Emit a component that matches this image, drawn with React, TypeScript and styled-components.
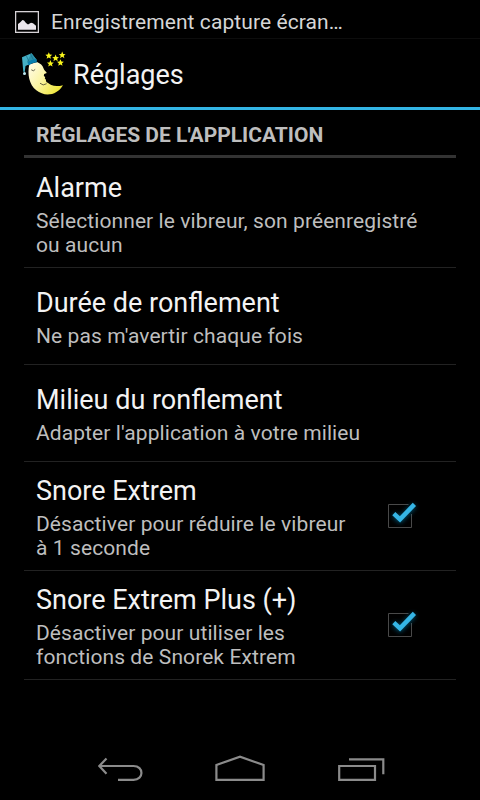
import styled, { createGlobalStyle } from "styled-components";

const settings = [
  {
    title: "Alarme",
    summary: ["Sélectionner le vibreur, son préenregistré", "ou aucun"],
  },
  {
    title: "Durée de ronflement",
    summary: ["Ne pas m'avertir chaque fois"],
  },
  {
    title: "Milieu du ronflement",
    summary: ["Adapter l'application à votre milieu"],
  },
  {
    title: "Snore Extrem",
    summary: ["Désactiver pour réduire le vibreur", "à 1 seconde"],
    checked: true,
  },
  {
    title: "Snore Extrem Plus (+)",
    summary: ["Désactiver pour utiliser les", "fonctions de Snorek Extrem"],
    checked: true,
  },
];

const stars = [
  [48.8, 55.8],
  [55.6, 58.2],
  [62.2, 55.2],
  [50.4, 63.6],
  [60.4, 62.8],
];

function PictureIcon() {
  return (
    <svg width="24" height="23" viewBox="0 0 24 23">
      <rect x="0.6" y="1.65" width="22.8" height="20.7" fill="none" stroke="#d6d2d6" strokeWidth="1.3" />
      <path d="M3 19.8V14L5 12.5L7.5 10L9 10.5L11 13L13 14.5L16 12.8L18 13.2L21 15.8V19.8Z" fill="#ebe6ec" />
    </svg>
  );
}

function MoonIcon() {
  return (
    <svg width="48" height="48" viewBox="20 50 48 48">
      <defs>
        <linearGradient id="moon" x1="28" y1="68" x2="60" y2="90" gradientUnits="userSpaceOnUse">
          <stop offset="0" stopColor="#fffbe4" />
          <stop offset="0.45" stopColor="#fbf5a4" />
          <stop offset="1" stopColor="#eee535" />
        </linearGradient>
      </defs>
      <path
        d="M29.3 64.5C27.2 74 29 84.5 36.3 90.3C45 97.5 57.5 95 63 85.2C58.5 86.4 54.5 86.4 51.2 85C49.5 84.3 48.2 82.6 46.6 82.2C45.6 81.3 46.5 79.5 44.8 78.6L45.2 77L43.8 76L44.2 73.9L46.8 72.9C46 71.2 43.8 70.2 43.5 68.2C42.7 65.5 40.3 63.4 37 62Z"
        fill="url(#moon)"
      />
      <path d="M31.3 69.8Q33.6 71.9 35.2 69.4M40 83.2Q43 86.4 46.6 83.7" fill="none" stroke="#42402c" strokeWidth="0.8" />
      <path d="M22 57.3L31.5 53.2L36.9 60.2L28.7 64.5L25.5 66L24.7 72L23.3 71.8Z" fill="#45afc5" />
      <path d="M31.5 53.2L36.9 60.2L28.4 65L27 61.5Z" fill="#2a91a9" />
      <path d="M27.8 62.2Q32.1 58.6 36.2 59.3L37 62.5Q32.5 61.8 28.7 65.5Z" fill="#087eaf" />
      <path d="M26.5 56L29 61.7M30.4 54L33.3 59.5" stroke="#176c85" strokeWidth="0.7" />
      <circle cx="24.5" cy="73.6" r="1.5" fill="#bfeaf2" />
      {stars.map(([x, y]) => (
        <path
          key={x}
          transform={`translate(${x} ${y})`}
          d="M0-3.6L1-1.2L3.4-1L1.5.6L2.2 3L0 1.6L-2.2 3L-1.5.6L-3.4-1L-1-1.2Z"
          fill="#f9f51c"
        />
      ))}
    </svg>
  );
}

function CheckIcon() {
  return (
    <svg width="48" height="48" viewBox="376 492 48 48">
      <defs>
        <filter id="glow" x="-50%" y="-50%" width="200%" height="200%">
          <feGaussianBlur stdDeviation="2.4" />
        </filter>
      </defs>
      <path d="M408.5 504.5H388.5V527.5H411.5V514" fill="none" stroke="#494949" />
      <path d="M394 514.5L400 520L414.3 505.3" fill="none" stroke="#087ba9" strokeWidth="4.5" opacity="0.75" filter="url(#glow)" />
      <path d="M393.8 513.6L400 519.3L414.4 504.4" fill="none" stroke="#35b5e5" strokeWidth="4.5" />
    </svg>
  );
}

function BackIcon() {
  return (
    <svg width="50" height="32" viewBox="95 753 50 32">
      <path d="M106.5 758.5L99.3 766L106.5 773.7M100 766H133.5C144.1 766 144.1 779.8 133.5 779.8H118" fill="none" stroke="#8b8b8b" strokeWidth="2.2" />
    </svg>
  );
}

function HomeIcon() {
  return (
    <svg width="50" height="32" viewBox="215 753 50 32">
      <path d="M216.4 779.8V765L240 756.6L263.6 765V779.8Z" fill="none" stroke="#8b8b8b" strokeWidth="2.2" />
    </svg>
  );
}

function RecentIcon() {
  return (
    <svg width="50" height="32" viewBox="335 753 50 32">
      <path d="M339.2 766H375V779.8H339.2ZM349 759.3H383.3V774.3" fill="none" stroke="#8b8b8b" strokeWidth="2.2" />
    </svg>
  );
}

export default function App() {
  return (
    <Screen>
      <GlobalStyle />
      <StatusBar>
        <PictureIcon />
        <span>Enregistrement capture écran…</span>
      </StatusBar>
      <ActionBar>
        <MoonIcon />
        <h1>Réglages</h1>
      </ActionBar>
      <Preferences>
        <SectionTitle>RÉGLAGES DE L'APPLICATION</SectionTitle>
        {settings.map((setting) => (
          <Row key={setting.title} $lines={setting.summary.length}>
            <Label>
              <Title>{setting.title}</Title>
              {setting.summary.map((line) => (
                <Summary key={line}>{line}</Summary>
              ))}
            </Label>
            {setting.checked && <CheckIcon />}
          </Row>
        ))}
      </Preferences>
      <NavigationBar>
        <BackIcon />
        <HomeIcon />
        <RecentIcon />
      </NavigationBar>
    </Screen>
  );
}

const GlobalStyle = createGlobalStyle`
  * {
    box-sizing: border-box;
  }

  body {
    margin: 0;
    background: #000;
  }

  svg {
    display: block;
    flex-shrink: 0;
  }
`;

const Screen = styled.div`
  width: 480px;
  height: 800px;
  display: flex;
  flex-direction: column;
  overflow: hidden;
  background: #000;
  color: #f3f3f3;
  font-family: Roboto, "Liberation Sans", sans-serif;
`;

const StatusBar = styled.div`
  height: 39px;
  display: flex;
  align-items: center;
  gap: 12px;
  padding: 5px 15px 0;
  border-bottom: 1px solid #0d0d0d;
  font-size: 21px;
  letter-spacing: 0.09px;
  color: #d6d6d6;
`;

const ActionBar = styled.header`
  height: 71px;
  display: flex;
  align-items: center;
  gap: 5px;
  padding: 2px 20px 0;
  border-bottom: 3px solid #33b5e5;

  h1 {
    margin: 0;
    padding-top: 2px;
    font-size: 27px;
    font-weight: 400;
    line-height: 32px;
  }
`;

const Preferences = styled.main`
  flex: 1;
  padding: 0 24px;
`;

const SectionTitle = styled.h2`
  height: 48px;
  margin: 0;
  padding: 13px 12px 0;
  border-bottom: 3px solid #333;
  font-size: 21px;
  font-weight: 700;
  line-height: 25px;
  color: #bebebe;
`;

const Row = styled.div<{ $lines: number }>`
  height: ${(props) => (props.$lines > 1 ? 109 : 97)}px;
  display: flex;
  align-items: center;
  justify-content: space-between;
  padding: 0 32px 0 12px;
  border-bottom: 1px solid #222;
  white-space: nowrap;

  ${SectionTitle} + & {
    height: 110px;
    padding-top: 1px;
  }
`;

const Label = styled.div`
  padding-top: 2px;
`;

const Title = styled.div`
  margin-bottom: 4px;
  font-size: 27px;
  line-height: 33px;
`;

const Summary = styled.div`
  font-size: 21px;
  line-height: 24px;
  letter-spacing: 0.09px;
  color: #bebebe;
`;

const NavigationBar = styled.nav`
  height: 72px;
  display: flex;
  gap: 70px;
  padding: 25px 0 0 95px;
`;
